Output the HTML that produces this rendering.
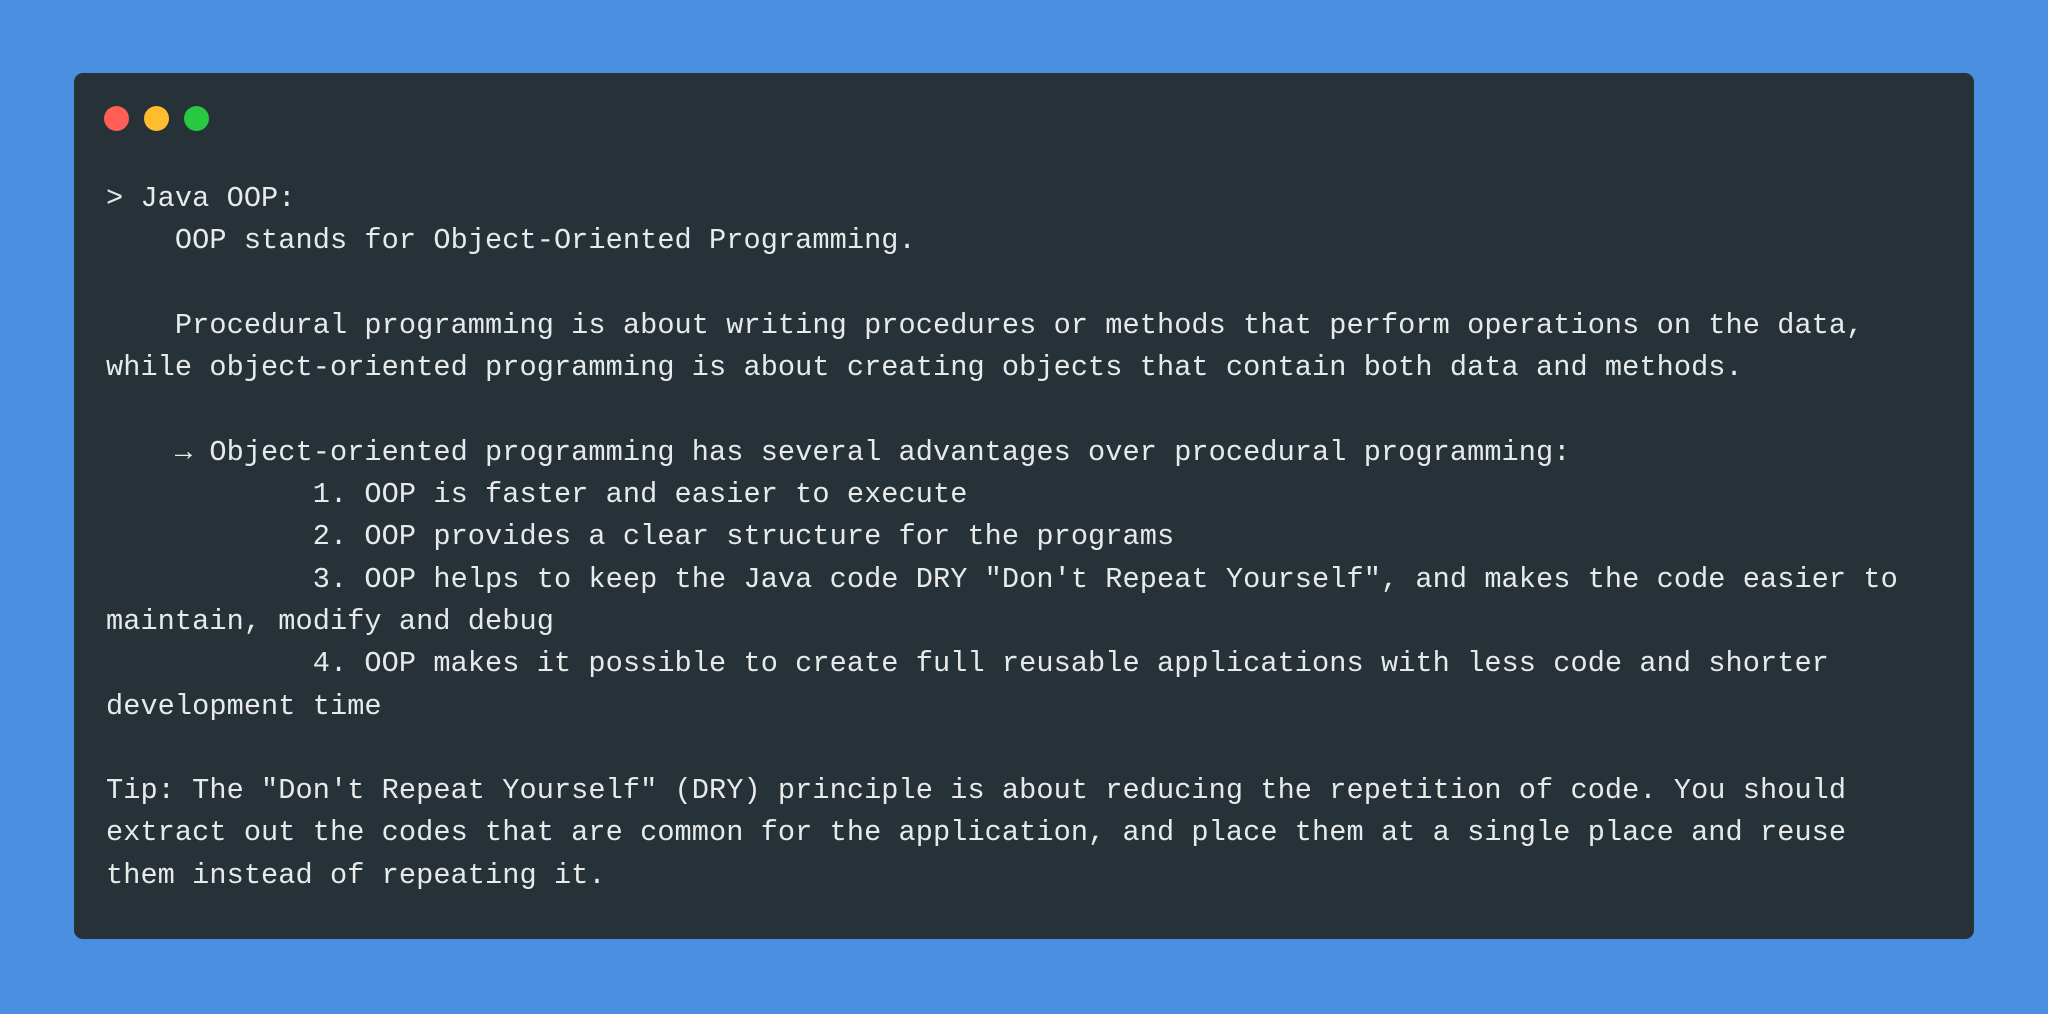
<!DOCTYPE html>
<html><head><meta charset="utf-8"><style>
html,body{margin:0;padding:0;}
body{width:2048px;height:1014px;background:#4a8fe0;position:relative;overflow:hidden;}
.win{position:absolute;left:74px;top:73px;width:1900px;height:866px;background:#263238;border-radius:9px;}
.dot{position:absolute;top:106px;width:25px;height:25px;border-radius:50%;}
pre{position:absolute;left:106px;top:178px;margin:0;font-family:"Liberation Mono",monospace;font-size:28.6px;letter-spacing:0.07px;line-height:42.3px;color:#e8eaea;white-space:pre;}
</style></head><body>
<div class="win"></div>
<div class="dot" style="left:104px;background:#ff5f57"></div>
<div class="dot" style="left:144px;background:#febc2e"></div>
<div class="dot" style="left:184px;background:#28c840"></div>
<pre>&gt; Java OOP:
    OOP stands for Object-Oriented Programming.

    Procedural programming is about writing procedures or methods that perform operations on the data,
while object-oriented programming is about creating objects that contain both data and methods.

    → Object-oriented programming has several advantages over procedural programming:
            1. OOP is faster and easier to execute
            2. OOP provides a clear structure for the programs
            3. OOP helps to keep the Java code DRY "Don't Repeat Yourself", and makes the code easier to
maintain, modify and debug
            4. OOP makes it possible to create full reusable applications with less code and shorter
development time

Tip: The "Don't Repeat Yourself" (DRY) principle is about reducing the repetition of code. You should
extract out the codes that are common for the application, and place them at a single place and reuse
them instead of repeating it.</pre>
</body></html>
